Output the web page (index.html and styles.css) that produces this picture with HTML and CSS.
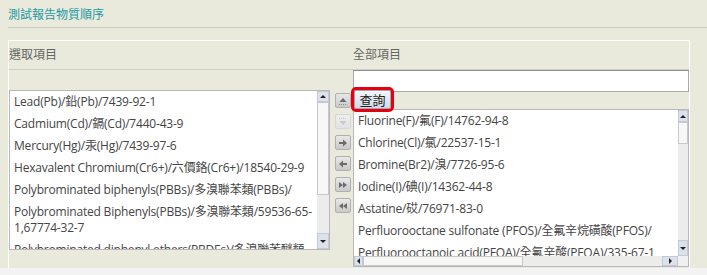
FILE: index.html
```html
<!DOCTYPE html>
<html lang="zh-Hant">
<head>
    <meta charset="UTF-8">
    <meta name="viewport" content="width=device-width, initial-scale=1.0">
    <title>測試報告物質順序</title>
    <link rel="stylesheet" href="styles.css">
</head>
<body>
    <div class="page-title">測試報告物質順序</div>

    <div class="panel">
        <div class="panel-head">
            <div class="head-cell">選取項目</div>
            <div></div>
            <div class="head-cell">全部項目</div>
        </div>

        <div class="panel-body">
            <div class="left-cell">
                <div class="listbox selected-list">
                    <ul class="items">
                        <li>Lead(Pb)/鉛(Pb)/7439-92-1</li>
                        <li>Cadmium(Cd)/鎘(Cd)/7440-43-9</li>
                        <li>Mercury(Hg)/汞(Hg)/7439-97-6</li>
                        <li>Hexavalent Chromium(Cr6+)/六價鉻(Cr6+)/18540-29-9</li>
                        <li>Polybrominated biphenyls(PBBs)/多溴聯苯類(PBBs)/</li>
                        <li>Polybrominated Biphenyls(PBBs)/多溴聯苯類/59536-65-<br>1,67774-32-7</li>
                        <li>Polybrominated diphenyl ethers(PBDEs)/多溴聯苯醚類</li>
                    </ul>
                    <div class="vscroll">
                        <span class="sb-arrow up"></span>
                        <span class="sb-thumb"></span>
                        <span class="sb-track"></span>
                        <span class="sb-arrow down"></span>
                    </div>
                </div>
            </div>

            <div class="tools">
                <button class="tool" title="上移">
                    <svg width="10" height="10" viewBox="0 0 10 10"><path d="M5 2 L8.5 6 H1.5 Z" fill="#6b6b6b"/><path d="M1 8.5 H9" stroke="#8a8a8a" stroke-dasharray="1 1"/></svg>
                </button>
                <button class="tool" disabled title="下移">
                    <svg width="10" height="10" viewBox="0 0 10 10"><path d="M1 1.5 H9" stroke="#c8c8c8" stroke-dasharray="1 1"/><path d="M5 8 L8.5 4 H1.5 Z" fill="#c8c8c8"/></svg>
                </button>
                <button class="tool" title="加入">
                    <svg width="10" height="10" viewBox="0 0 10 10"><path d="M1 4 H5 V1.5 L9 5 L5 8.5 V6 H1 Z" fill="#6b6b6b"/></svg>
                </button>
                <button class="tool" title="移除">
                    <svg width="10" height="10" viewBox="0 0 10 10"><path d="M9 4 H5 V1.5 L1 5 L5 8.5 V6 H9 Z" fill="#6b6b6b"/></svg>
                </button>
                <button class="tool" title="全部加入">
                    <svg width="10" height="10" viewBox="0 0 10 10"><path d="M1 2 L5 5 L1 8 Z M5 2 L9 5 L5 8 Z" fill="#6b6b6b"/></svg>
                </button>
                <button class="tool" title="全部移除">
                    <svg width="10" height="10" viewBox="0 0 10 10"><path d="M9 2 L5 5 L9 8 Z M5 2 L1 5 L5 8 Z" fill="#6b6b6b"/></svg>
                </button>
            </div>

            <div class="right-cell">
                <input class="search" type="text">
                <button class="query">查詢</button>
                <div class="listbox all-list">
                    <ul class="items">
                        <li>Fluorine(F)/氟(F)/14762-94-8</li>
                        <li>Chlorine(Cl)/氯/22537-15-1</li>
                        <li>Bromine(Br2)/溴/7726-95-6</li>
                        <li>Iodine(I)/碘(I)/14362-44-8</li>
                        <li>Astatine/砹/76971-83-0</li>
                        <li>Perfluorooctane sulfonate (PFOS)/全氟辛烷磺酸(PFOS)/</li>
                        <li>Perfluorooctanoic acid(PFOA)/全氟辛酸(PFOA)/335-67-1</li>
                    </ul>
                    <div class="vscroll">
                        <span class="sb-arrow up"></span>
                        <span class="sb-thumb"></span>
                        <span class="sb-track"></span>
                        <span class="sb-arrow down"></span>
                    </div>
                    <div class="hscroll">
                        <span class="sb-arrow left"></span>
                        <span class="sb-thumb"></span>
                        <span class="sb-track"></span>
                        <span class="sb-arrow right"></span>
                    </div>
                    <div class="corner"></div>
                </div>
            </div>
        </div>
    </div>

    <div class="footer"></div>
</body>
</html>
```

FILE: styles.css
```css
body {
    margin: 0;
    background-color: #e9eadb;
    font-family: "Noto Sans CJK TC", sans-serif;
    font-size: 12px;
    overflow: hidden;
}
.page-title {
    margin-left: 8px;
    padding: 6px 0 5px;
    line-height: 16px;
    color: #2399a6;
    border-bottom: 1px solid #c9cabf;
}
.panel {
    box-sizing: border-box;
    width: 682px;
    margin: 12px 0 0 8px;
    border: 1px solid #ffffff;
    border-bottom: none;
}
.panel-head,
.panel-body {
    display: grid;
    grid-template-columns: 325px 19px 336px;
}
.panel-head {
    height: 28px;
    border-bottom: 1px solid #cfd0c8;
}
.head-cell {
    padding-top: 5px;
    line-height: 16px;
    color: #666666;
}
.panel-body {
    height: 198px;
}

/* list boxes */
.listbox {
    box-sizing: border-box;
    background: #ffffff;
    border: 1px solid #b8b8b8;
    overflow: hidden;
}
.items {
    list-style: none;
    margin: 0;
    padding: 0;
    overflow: hidden;
    font-family: "Open Sans", "Noto Sans CJK TC", sans-serif;
    font-size: 12px;
    letter-spacing: -0.2px;
    color: #444444;
}
.items li {
    padding: 3px 4px;
    line-height: 16px;
    white-space: nowrap;
}
.left-cell {
    padding-top: 20px;
}
.selected-list {
    display: flex;
    width: 321px;
    height: 160px;
}
.selected-list .items {
    flex: 1;
}
.selected-list .vscroll {
    width: 12px;
}
.all-list {
    display: grid;
    grid-template-columns: 1fr 10px;
    grid-template-rows: 1fr 10px;
    height: 158px;
}

/* fake scrollbars */
.vscroll,
.hscroll {
    display: flex;
    background: #ececec;
}
.vscroll {
    flex-direction: column;
}
.sb-arrow {
    display: flex;
    align-items: center;
    justify-content: center;
    flex: none;
    background: #dbe2eb;
    border: 1px solid #c3cad4;
    box-sizing: border-box;
}
.sb-arrow::before {
    content: "";
    border: 3px solid transparent;
}
.sb-arrow.up::before { border-bottom: 3px solid #222; border-top-width: 0; }
.sb-arrow.down::before { border-top: 3px solid #222; border-bottom-width: 0; }
.sb-arrow.left::before { border-right: 3px solid #222; border-left-width: 0; }
.sb-arrow.right::before { border-left: 3px solid #222; border-right-width: 0; }
.sb-thumb {
    flex: none;
    box-sizing: border-box;
    background: #f7f7f7;
    border: 1px solid #c8c8c8;
}
.sb-track {
    flex: 1;
}
.selected-list .sb-arrow.up { height: 11px; }
.selected-list .sb-thumb { height: 93px; }
.selected-list .sb-arrow.down { height: 16px; }
.all-list .vscroll .sb-arrow.up { height: 12px; }
.all-list .vscroll .sb-thumb { height: 22px; }
.all-list .vscroll .sb-arrow.down { height: 16px; }
.all-list .hscroll .sb-arrow.left { width: 9px; }
.all-list .hscroll .sb-thumb { width: 160px; }
.all-list .hscroll .sb-arrow.right { width: 16px; }
.corner {
    background: #f0f0f0;
}

/* move buttons */
.tools {
    display: flex;
    flex-direction: column;
    gap: 6px;
    padding: 23px 0 0 1px;
}
.tool {
    display: flex;
    align-items: center;
    justify-content: center;
    width: 16px;
    height: 15px;
    padding: 0;
    border: 1px solid #b0b0b0;
    border-radius: 2px;
    background: linear-gradient(#e8e8e8, #c9c9c9);
}
.tool:disabled {
    border-color: #d6d6d6;
    background: linear-gradient(#efefef, #e2e2e2);
}

/* search side */
.search {
    display: block;
    box-sizing: border-box;
    width: 336px;
    height: 22px;
    margin: 0;
    border: 1px solid #a9a9a9;
    border-top-color: #8f8f8f;
    background: #ffffff;
}
.query {
    display: block;
    box-sizing: border-box;
    width: 37px;
    height: 19px;
    margin: -2px 0 0 1px;
    padding: 0;
    font-family: "Noto Sans CJK TC", sans-serif;
    font-size: 13px;
    line-height: 15px;
    color: #222222;
    border: 1px solid #9aa7b8;
    border-radius: 2px;
    background: linear-gradient(#f4f7fb, #cfd9e6);
    outline: 3px solid #e4000f;
}

.footer {
    height: 8px;
    background: #f3f3f3;
}
```
